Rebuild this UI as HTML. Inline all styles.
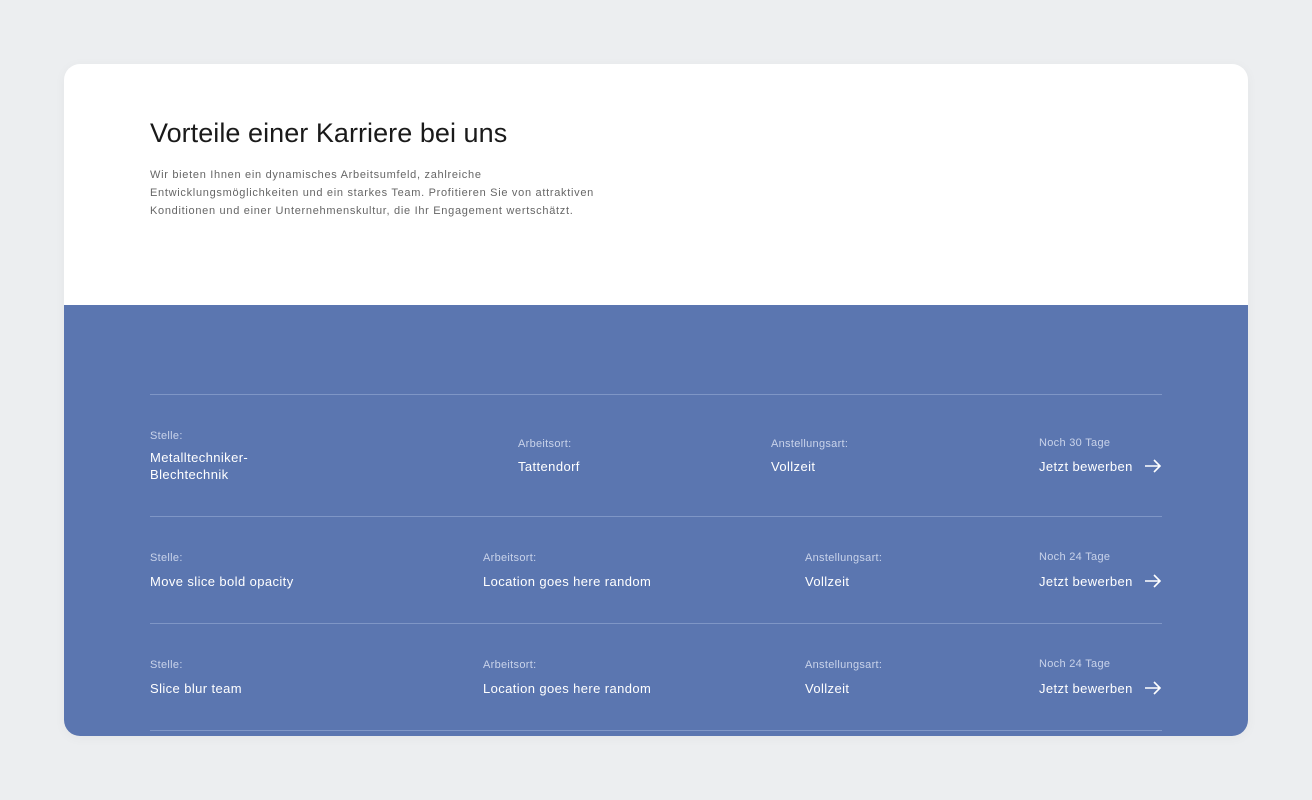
<!DOCTYPE html>
<html><head><meta charset="utf-8"><style>
*{margin:0;padding:0;box-sizing:border-box}
body{width:1312px;height:800px;background:#eceef0;font-family:"Liberation Sans",sans-serif;position:relative;overflow:hidden}
.card{position:absolute;left:64px;top:64px;width:1184px;height:672px;border-radius:16px;background:#fff;overflow:hidden;box-shadow:0 2px 12px rgba(0,0,0,0.04)}
.blue{position:absolute;left:0;top:241px;width:1184px;height:431px;background:#5b76b0}
.t{position:absolute;white-space:nowrap}
h1{position:absolute;left:86px;top:54px;font-size:27px;font-weight:400;color:#1a1a1a;letter-spacing:0.05px}
p.d{position:absolute;left:86px;top:102px;font-size:11px;line-height:18px;color:#666;width:540px;letter-spacing:0.7px}
.line{position:absolute;left:86px;width:1012px;height:1px;background:#7f96c6}
.lab{font-size:11px;color:#c9d3ea;letter-spacing:0.3px}
.val{font-size:13px;color:#fff;line-height:17px;letter-spacing:0.4px}
.arr{position:absolute}
</style></head><body>
<div class="card">
<h1>Vorteile einer Karriere bei uns</h1>
<p class="d">Wir bieten Ihnen ein dynamisches Arbeitsumfeld, zahlreiche<br>Entwicklungsmöglichkeiten und ein starkes Team. Profitieren Sie von attraktiven<br>Konditionen und einer Unternehmenskultur, die Ihr Engagement wertschätzt.</p>
<div class="blue">
<div class="line" style="top:89px"></div>
<div class="line" style="top:211px"></div>
<div class="line" style="top:318px"></div>
<div class="line" style="top:425px"></div>

<div class="t lab" style="left:86px;top:125px">Stelle:</div>
<div class="t val" style="left:86px;top:144px">Metalltechniker-<br>Blechtechnik</div>
<div class="t lab" style="left:454px;top:133px">Arbeitsort:</div>
<div class="t val" style="left:454px;top:153px">Tattendorf</div>
<div class="t lab" style="left:707px;top:133px">Anstellungsart:</div>
<div class="t val" style="left:707px;top:153px">Vollzeit</div>
<div class="t lab" style="left:975px;top:132px">Noch 30 Tage</div>
<div class="t val" style="left:975px;top:153px">Jetzt bewerben</div>
<svg class="arr" style="left:1080px;top:154px" width="18" height="14" viewBox="0 0 18 14"><path d="M1 7H16M10 1l6 6-6 6" stroke="#fff" stroke-width="1.6" fill="none"/></svg>

<div class="t lab" style="left:86px;top:247px">Stelle:</div>
<div class="t val" style="left:86px;top:268px">Move slice bold opacity</div>
<div class="t lab" style="left:419px;top:247px">Arbeitsort:</div>
<div class="t val" style="left:419px;top:268px">Location goes here random</div>
<div class="t lab" style="left:741px;top:247px">Anstellungsart:</div>
<div class="t val" style="left:741px;top:268px">Vollzeit</div>
<div class="t lab" style="left:975px;top:246px">Noch 24 Tage</div>
<div class="t val" style="left:975px;top:268px">Jetzt bewerben</div>
<svg class="arr" style="left:1080px;top:269px" width="18" height="14" viewBox="0 0 18 14"><path d="M1 7H16M10 1l6 6-6 6" stroke="#fff" stroke-width="1.6" fill="none"/></svg>

<div class="t lab" style="left:86px;top:354px">Stelle:</div>
<div class="t val" style="left:86px;top:375px">Slice blur team</div>
<div class="t lab" style="left:419px;top:354px">Arbeitsort:</div>
<div class="t val" style="left:419px;top:375px">Location goes here random</div>
<div class="t lab" style="left:741px;top:354px">Anstellungsart:</div>
<div class="t val" style="left:741px;top:375px">Vollzeit</div>
<div class="t lab" style="left:975px;top:353px">Noch 24 Tage</div>
<div class="t val" style="left:975px;top:375px">Jetzt bewerben</div>
<svg class="arr" style="left:1080px;top:376px" width="18" height="14" viewBox="0 0 18 14"><path d="M1 7H16M10 1l6 6-6 6" stroke="#fff" stroke-width="1.6" fill="none"/></svg>
</div>
</div>
</body></html>
